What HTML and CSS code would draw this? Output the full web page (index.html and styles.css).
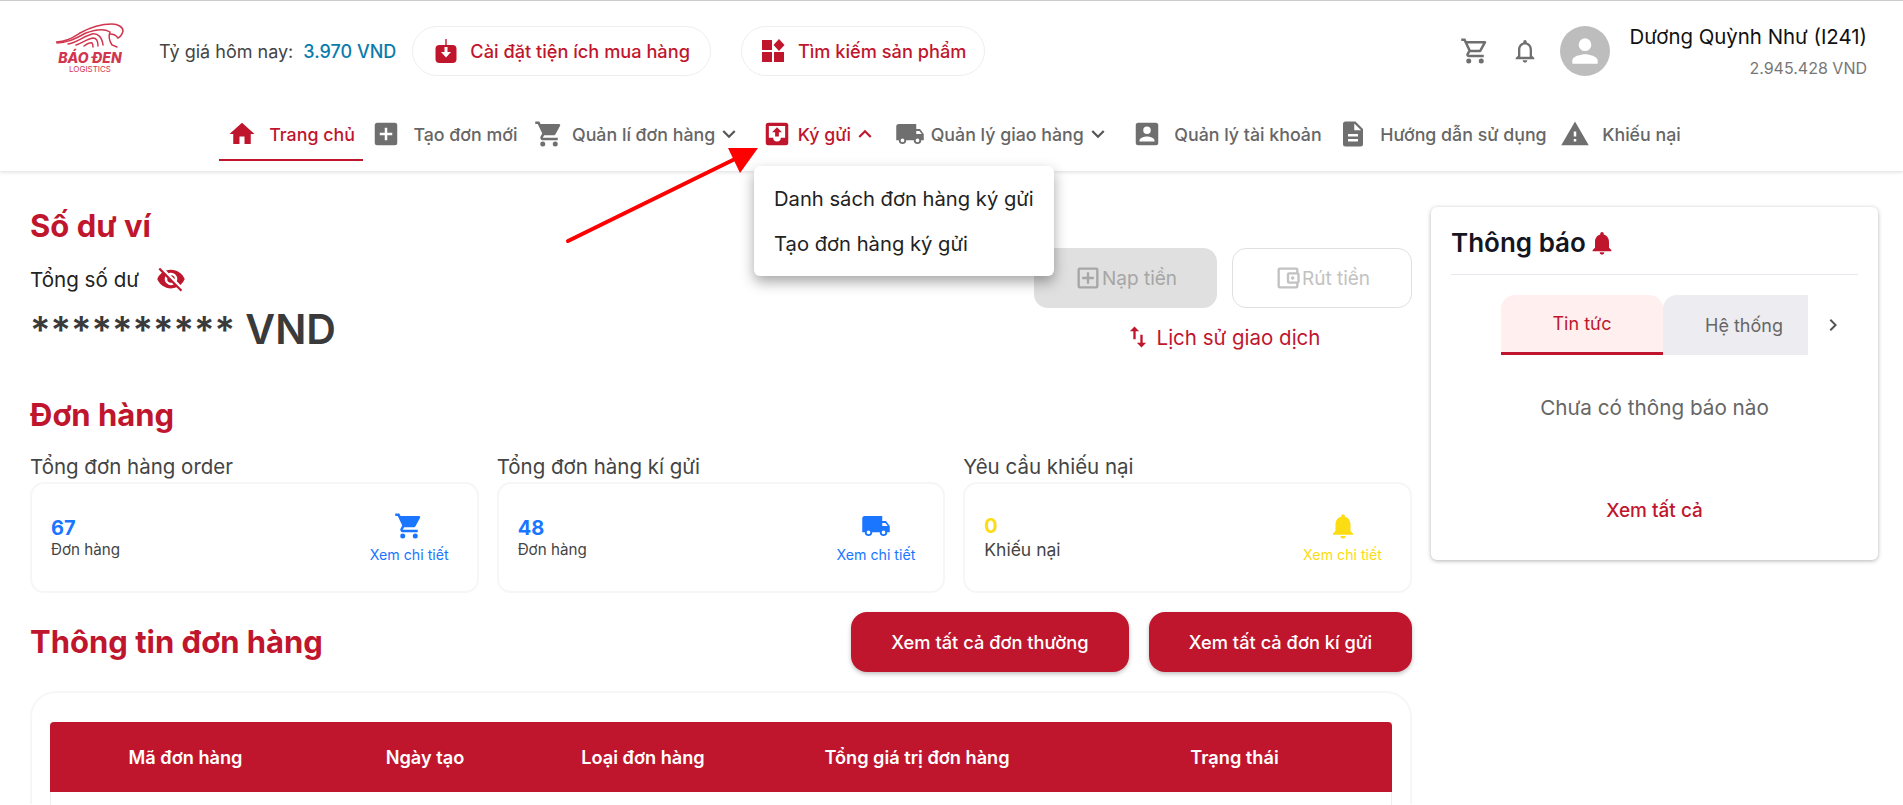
FILE: index.html
```html
<!DOCTYPE html>
<html lang="vi">
<head>
  <meta charset="utf-8">
  <title>Bao Den Logistics</title>
  <link rel="stylesheet" href="styles.css">
</head>
<body>
  <header class="site-header">
    <div class="top-row">
      <div class="logo">
        <svg width="68" height="26" viewBox="0 0 68 26" fill="none" stroke="#d2354e" stroke-width="1.5" stroke-linecap="round">
          <path d="M0 19C10 19 16 15 24 10C33 5 42 1 56 1C62 1 67 4 67 8C66 12 64 14 62 15C60 12 57 11 54 11"/>
          <path d="M1 20C12 20 20 15 30 10C38 7 48 5 54 9C52 14 54 19 56 22L61 24"/>
          <path d="M12 21C20 20 28 13 36 11C42 10 46 14 47 22"/>
          <path d="M20 22C26 20 31 16 37 15C40 15 42 18 42 23"/>
          <path d="M28 23C31 21 34 19 36 20C37 21 37 23 37 24"/>
        </svg>
        <span class="logo-name">BÁO ĐEN</span>
        <span class="logo-sub">LOGISTICS</span>
      </div>
      <div class="rate">Tỷ giá hôm nay: <b>3.970 VND</b></div>
      <a class="pill">
        <svg width="22" height="24" viewBox="0 0 22 24">
          <rect x="0.500" y="6" width="21" height="18" rx="4" fill="#bf162e"/>
          <rect x="10.300" y="0" width="1.400" height="8" fill="#bf162e"/>
          <path d="M9.500 8h3v5H16l-5 5.500L6 13h3.500z" fill="#fff"/>
        </svg>
        Cài đặt tiện ích mua hàng
      </a>
      <a class="pill pill-search">
        <svg width="24" height="24" viewBox="0 0 24 24" fill="#bf162e"><rect x="1" y="1" width="10" height="10"/><rect x="1" y="13" width="10" height="10"/><rect x="13" y="13" width="10" height="10"/><path d="M18 0l5.500 6-5.500 6-5.500-6z"/></svg>
        Tìm kiếm sản phẩm
      </a>
      <div class="user-area">
        <svg class="gray-icon" width="30" height="30" viewBox="0 0 24 24" fill="#6f6f6f"><path d="M15.550 13c.750 0 1.410-.410 1.750-1.030l3.580-6.490A1 1 0 0 0 20.010 4H5.210l-.940-2H1v2h2l3.600 7.590-1.350 2.440C4.520 15.370 5.480 17 7 17h12v-2H7l1.100-2h7.450zM6.160 6h12.150l-2.760 5H8.530L6.160 6zM7 18a2 2 0 1 0 0 4 2 2 0 0 0 0-4zm10 0a2 2 0 1 0 0 4 2 2 0 0 0 0-4z"/></svg>
        <svg class="gray-icon" width="28" height="28" viewBox="0 0 24 24" fill="#6f6f6f"><path d="M12 22a2 2 0 0 0 2-2h-4a2 2 0 0 0 2 2zm6-6v-5c0-3.070-1.640-5.640-4.500-6.320V4a1.500 1.500 0 0 0-3 0v.680C7.630 5.360 6 7.920 6 11v5l-2 2v1h16v-1l-2-2zm-2 1H8v-6c0-2.480 1.510-4.500 4-4.500s4 2.020 4 4.500v6z"/></svg>
        <div class="avatar">
          <svg width="38" height="38" viewBox="0 0 24 24" fill="#fff"><path d="M12 12a4 4 0 1 0 0-8 4 4 0 0 0 0 8zm0 2c-2.670 0-8 1.340-8 4v2h16v-2c0-2.660-5.330-4-8-4z"/></svg>
        </div>
        <div class="user-info">
          <div class="user-name">Dương Quỳnh Như (I241)</div>
          <div class="user-money">2.945.428 VND</div>
        </div>
      </div>
    </div>

    <nav class="main-nav">
      <a class="nav-item active">
        <svg width="30" height="30" viewBox="0 0 24 24" fill="#bf162e"><path d="M10 20v-6h4v6h5v-8h3L12 3 2 12h3v8z"/></svg>
        Trang chủ
      </a>
      <a class="nav-item">
        <svg width="30" height="30" viewBox="0 0 24 24" fill="#6f6f6f"><path d="M19 3H5a2 2 0 0 0-2 2v14a2 2 0 0 0 2 2h14a2 2 0 0 0 2-2V5a2 2 0 0 0-2-2zm-2 10h-4v4h-2v-4H7v-2h4V7h2v4h4v2z"/></svg>
        Tạo đơn mới
      </a>
      <a class="nav-item cart-item">
        <svg width="30" height="30" viewBox="0 0 24 24" fill="#6f6f6f"><path d="M7 18a2 2 0 1 0 0 4 2 2 0 0 0 0-4zM1 2v2h2l3.600 7.590-1.350 2.450A2 2 0 0 0 7 17h12v-2H7.420a.25.25 0 0 1-.250-.250l.030-.120.900-1.630h7.450c.750 0 1.410-.410 1.750-1.030l3.580-6.490A1 1 0 0 0 20 4H5.210l-.940-2H1zm16 16a2 2 0 1 0 0 4 2 2 0 0 0 0-4z"/></svg>
        Quản lí đơn hàng
        <svg class="chev" width="26" height="26" viewBox="0 0 24 24" fill="#555"><path d="M7.410 8.590 12 13.170l4.590-4.580L18 10l-6 6-6-6z"/></svg>
      </a>
      <a class="nav-item tight open">
        <svg width="30" height="30" viewBox="0 0 24 24">
          <rect x="3" y="3" width="18" height="18" rx="2" fill="#bf162e"/>
          <path d="M5.500 5.500h13V15h-3.500a3 3 0 0 1-6 0H5.500z" fill="#fff"/>
          <path d="M12 6.500l-4 4h2.500V14h3v-3.500H16z" fill="#bf162e"/>
        </svg>
        Ký gửi
        <svg class="chev" width="26" height="26" viewBox="0 0 24 24" fill="#bf162e"><path d="M7.410 15.410 12 10.830l4.590 4.580L18 14l-6-6-6 6z"/></svg>
      </a>
      <a class="nav-item tight">
        <svg width="30" height="30" viewBox="0 0 24 24" fill="#6f6f6f"><path d="M20 8h-3V4H3a2 2 0 0 0-2 2v11h2a3 3 0 0 0 6 0h6a3 3 0 0 0 6 0h2v-5l-3-4zM6 18.500a1.500 1.500 0 1 1 0-3 1.500 1.500 0 0 1 0 3zm13.500-9 1.960 2.500H17V9.500h2.500zM18 18.500a1.500 1.500 0 1 1 0-3 1.500 1.500 0 0 1 0 3z"/></svg>
        Quản lý giao hàng
        <svg class="chev" width="26" height="26" viewBox="0 0 24 24" fill="#555"><path d="M7.410 8.590 12 13.170l4.590-4.580L18 10l-6 6-6-6z"/></svg>
      </a>
      <a class="nav-item account-item">
        <svg width="30" height="30" viewBox="0 0 24 24" fill="#6f6f6f"><path d="M3 5v14a2 2 0 0 0 2 2h14a2 2 0 0 0 2-2V5a2 2 0 0 0-2-2H5a2 2 0 0 0-2 2zm12 4a3 3 0 1 1-6 0 3 3 0 0 1 6 0zm-9 8c0-2 4-3.100 6-3.100s6 1.100 6 3.100v1H6v-1z"/></svg>
        Quản lý tài khoản
      </a>
      <a class="nav-item">
        <svg width="30" height="30" viewBox="0 0 24 24" fill="#6f6f6f"><path d="M14 2H6a2 2 0 0 0-2 2v16a2 2 0 0 0 2 2h12a2 2 0 0 0 2-2V8l-6-6zm2 16H8v-2h8v2zm0-4H8v-2h8v2zm-3-5V3.500L18.500 9H13z"/></svg>
        Hướng dẫn sử dụng
      </a>
      <a class="nav-item complain-item">
        <svg width="30" height="30" viewBox="0 0 24 24" fill="#6f6f6f"><path d="M1 21h22L12 2 1 21zm12-3h-2v-2h2v2zm0-4h-2v-4h2v4z"/></svg>
        Khiếu nại
      </a>
    </nav>
  </header>

  <main class="page">
    <div class="left-col">
      <section class="wallet">
        <div>
          <h2 class="section-title">Số dư ví</h2>
          <div class="balance-label">
            Tổng số dư
            <svg width="30" height="30" viewBox="0 0 24 24" fill="#bf162e"><path d="M12 7a5 5 0 0 1 5 5c0 .650-.130 1.260-.360 1.830l2.920 2.920A11.800 11.800 0 0 0 23 12c-1.730-4.390-6-7.500-11-7.500-1.400 0-2.740.250-3.980.700l2.160 2.160C10.740 7.130 11.350 7 12 7zM2 4.270l2.280 2.280.460.460A11.800 11.800 0 0 0 1 12c1.730 4.390 6 7.500 11 7.500 1.550 0 3.030-.300 4.380-.840l.420.420L19.730 22 21 20.730 3.270 3 2 4.270zM7.530 9.800l1.550 1.550A2.800 2.800 0 0 0 9 12a3 3 0 0 0 3 3c.220 0 .440-.030.650-.080l1.550 1.550A5 5 0 0 1 7.530 9.800zm4.310-.780 3.150 3.150.020-.170a3 3 0 0 0-3-3l-.170.020z"/></svg>
          </div>
          <div class="balance-value"><span class="stars">**********</span> VND</div>
        </div>
        <div class="wallet-actions">
          <div class="wallet-buttons">
            <button class="btn-load" type="button">
              <svg width="28" height="28" viewBox="0 0 24 24" fill="#a6a6a6"><path d="M19 3H5a2 2 0 0 0-2 2v14a2 2 0 0 0 2 2h14a2 2 0 0 0 2-2V5a2 2 0 0 0-2-2zm0 16H5V5h14v14zm-8-2h2v-4h4v-2h-4V7h-2v4H7v2h4z"/></svg>
              Nạp tiền
            </button>
            <button class="btn-withdraw" type="button">
              <svg width="28" height="28" viewBox="0 0 24 24" fill="#c2c2c2"><path d="M21 7.280V5a2 2 0 0 0-2-2H5a2 2 0 0 0-2 2v14a2 2 0 0 0 2 2h14a2 2 0 0 0 2-2v-2.280A2 2 0 0 0 22 15V9a2 2 0 0 0-1-1.720zM20 9v6h-7V9h7zM5 19V5h14v2h-6a2 2 0 0 0-2 2v6a2 2 0 0 0 2 2h6v2H5zm11-5.500a1.500 1.500 0 1 0 0-3 1.500 1.500 0 0 0 0 3z"/></svg>
              Rút tiền
            </button>
          </div>
          <a class="history-link">
            <svg width="28" height="28" viewBox="0 0 24 24" fill="#bf162e"><path d="M16 17.010V10h-2v7.010h-3L15 21l4-3.990h-3zM9 3 5 6.990h3V14h2V6.990h3L9 3z"/></svg>
            Lịch sử giao dịch
          </a>
        </div>
      </section>

      <section class="orders">
        <h2 class="section-title">Đơn hàng</h2>
        <div class="stat-grid">
          <div class="stat">
            <div class="stat-label">Tổng đơn hàng order</div>
            <div class="stat-card blue">
              <div>
                <div class="stat-num">67</div>
                <div class="stat-unit">Đơn hàng</div>
              </div>
              <div class="stat-link">
                <svg width="30" height="30" viewBox="0 0 24 24" fill="currentColor"><path d="M7 18a2 2 0 1 0 0 4 2 2 0 0 0 0-4zM1 2v2h2l3.600 7.590-1.350 2.450A2 2 0 0 0 7 17h12v-2H7.420a.25.25 0 0 1-.250-.250l.030-.120.900-1.630h7.450c.750 0 1.410-.410 1.750-1.030l3.580-6.490A1 1 0 0 0 20 4H5.210l-.940-2H1zm16 16a2 2 0 1 0 0 4 2 2 0 0 0 0-4z"/></svg>
                Xem chi tiết
              </div>
            </div>
          </div>
          <div class="stat">
            <div class="stat-label">Tổng đơn hàng kí gửi</div>
            <div class="stat-card blue">
              <div>
                <div class="stat-num">48</div>
                <div class="stat-unit">Đơn hàng</div>
              </div>
              <div class="stat-link">
                <svg width="30" height="30" viewBox="0 0 24 24" fill="currentColor"><path d="M20 8h-3V4H3a2 2 0 0 0-2 2v11h2a3 3 0 0 0 6 0h6a3 3 0 0 0 6 0h2v-5l-3-4zM6 18.500a1.500 1.500 0 1 1 0-3 1.500 1.500 0 0 1 0 3zm13.500-9 1.960 2.500H17V9.500h2.500zM18 18.500a1.500 1.500 0 1 1 0-3 1.500 1.500 0 0 1 0 3z"/></svg>
                Xem chi tiết
              </div>
            </div>
          </div>
          <div class="stat">
            <div class="stat-label">Yêu cầu khiếu nại</div>
            <div class="stat-card yellow">
              <div>
                <div class="stat-num">0</div>
                <div class="stat-unit stat-unit-big">Khiếu nại</div>
              </div>
              <div class="stat-link">
                <svg width="30" height="30" viewBox="0 0 24 24" fill="currentColor"><path d="M12 22a2 2 0 0 0 2-2h-4a2 2 0 0 0 2 2zm6-6v-5c0-3.070-1.640-5.640-4.500-6.320V4a1.500 1.500 0 0 0-3 0v.680C7.630 5.360 6 7.920 6 11v5l-2 2v1h16v-1l-2-2z"/></svg>
                Xem chi tiết
              </div>
            </div>
          </div>
        </div>
      </section>

      <section class="order-info">
        <div class="order-info-head">
          <h2 class="section-title">Thông tin đơn hàng</h2>
          <div class="order-buttons">
            <button class="btn-red" type="button">Xem tất cả đơn thường</button>
            <button class="btn-red" type="button">Xem tất cả đơn kí gửi</button>
          </div>
        </div>
        <div class="table-card">
          <div class="table-head">
            <div>Mã đơn hàng</div>
            <div>Ngày tạo</div>
            <div>Loại đơn hàng</div>
            <div>Tổng giá trị đơn hàng</div>
            <div>Trạng thái</div>
          </div>
          <div class="table-body"></div>
        </div>
      </section>
    </div>

    <aside class="notice-card">
      <h3 class="notice-title">
        Thông báo
        <svg width="28" height="28" viewBox="0 0 24 24" fill="#bf162e"><path d="M12 22a2 2 0 0 0 2-2h-4a2 2 0 0 0 2 2zm6-6v-5c0-3.070-1.640-5.640-4.500-6.320V4a1.500 1.500 0 0 0-3 0v.680C7.630 5.360 6 7.920 6 11v5l-2 2v1h16v-1l-2-2z"/></svg>
      </h3>
      <div class="tabs">
        <div class="tab tab-active">Tin tức</div>
        <div class="tab">Hệ thống</div>
        <svg class="tab-next" width="24" height="24" viewBox="0 0 24 24" fill="#555"><path d="M8.590 16.590 13.170 12 8.590 7.410 10 6l6 6-6 6z"/></svg>
      </div>
      <p class="notice-empty">Chưa có thông báo nào</p>
      <a class="notice-all">Xem tất cả</a>
    </aside>
  </main>

  <div class="dropdown">
    <div class="dropdown-item">Danh sách đơn hàng ký gửi</div>
    <div class="dropdown-item">Tạo đơn hàng ký gửi</div>
  </div>

  <!-- red arrow drawn over the screenshot -->
  <svg class="annotation" width="200" height="100" viewBox="0 0 200 100">
    <line x1="3" y1="93" x2="172" y2="10" stroke="#fe0000" stroke-width="4" stroke-linecap="round"/>
    <polygon points="163,0 193,0 175,25" fill="#fe0000"/>
  </svg>
</body>
</html>
```

FILE: styles.css
```css
* {
  box-sizing: border-box;
}

html, body {
  height: 805px;
  overflow: hidden;
}

body {
  margin: 0;
  background-color: #ffffff;
  font-family: Inter, "Noto Sans", sans-serif;
  color: #222222;
  position: relative;
}

svg {
  flex-shrink: 0;
}

/* header */
.site-header {
  height: 171px;
  border-top: 1px solid #cccccc;
  background-color: #ffffff;
  box-shadow: 0 1px 4px rgba(0, 0, 0, 0.15);
  padding: 25px 36px 0 56px;
}

.top-row {
  display: flex;
  align-items: center;
  height: 50px;
}

.logo {
  width: 68px;
  margin-right: 35px;
  margin-top: -3px;
  align-self: flex-start;
  display: flex;
  flex-direction: column;
  align-items: center;
  color: #d2354e;
}

.logo-name {
  font-size: 14px;
  font-weight: 800;
  font-style: italic;
  line-height: 11px;
  margin-top: 3px;
  white-space: nowrap;
}

.logo-sub {
  font-size: 8px;
  line-height: 7px;
  margin-top: 3px;
}

.rate {
  font-size: 18px;
  color: #444444;
  white-space: nowrap;
  margin-right: 16px;
}

.rate b {
  font-weight: 500;
  color: #0a7cab;
  margin-left: 5px;
}

.pill {
  height: 50px;
  display: flex;
  align-items: center;
  gap: 13px;
  padding: 0 20px 0 22px;
  border: 1px solid #eeeeee;
  border-radius: 25px;
  font-size: 18.2px;
  font-weight: 500;
  color: #bf162e;
  white-space: nowrap;
  margin-right: 30px;
}

.pill-search {
  padding: 0 18px 0 19px;
}

.user-area {
  margin-left: auto;
  display: flex;
  align-items: center;
}

.gray-icon {
  margin-right: 21px;
}

.avatar {
  width: 50px;
  height: 50px;
  border-radius: 50%;
  background-color: #bdbdbd;
  display: flex;
  align-items: center;
  justify-content: center;
}

.user-info {
  margin-left: 20px;
  text-align: right;
}

.user-name {
  font-size: 20.4px;
  line-height: 24px;
  color: #111111;
}

.user-money {
  font-size: 16px;
  line-height: 20px;
  color: #777777;
  margin-top: 9px;
}

.main-nav {
  height: 52px;
  margin: 33px -36px 0 -56px;
  padding-left: 5px;
  display: flex;
  justify-content: center;
  align-items: flex-start;
}

.nav-item {
  height: 52px;
  display: flex;
  align-items: center;
  gap: 12px;
  padding: 0 8.3px;
  border-bottom: 2px solid transparent;
  font-size: 17.8px;
  font-weight: 500;
  color: #666666;
  white-space: nowrap;
}

.nav-item.tight {
  gap: 6px;
}

.nav-item.cart-item {
  gap: 8px;
  margin-right: 3px;
}

.nav-item.account-item {
  margin-left: 5px;
}

.nav-item.complain-item {
  margin-left: -3px;
}

.nav-item.active {
  color: #bf162e;
  border-bottom-color: #bf162e;
}

.nav-item.open {
  color: #bf162e;
}

.chev {
  margin-left: -5px;
}

.cart-item .chev {
  margin-left: -7px;
}

/* main content */
.page {
  display: flex;
  gap: 19px;
  padding: 36px 25px 0 30px;
}

.left-col {
  width: 1382px;
  flex-shrink: 0;
}

.section-title {
  margin: 0;
  font-size: 31px;
  font-weight: 700;
  line-height: 36px;
  color: #bf162e;
}

.wallet {
  display: flex;
  justify-content: space-between;
  height: 190px;
  padding-top: 1px;
}

.balance-label {
  display: flex;
  align-items: center;
  gap: 17px;
  font-size: 20.6px;
  margin-top: 20px;
  height: 30px;
}

.balance-value {
  font-size: 41px;
  font-weight: 600;
  line-height: 50px;
  margin-top: 10px;
  color: #3a3a3a;
}

.stars {
  font-size: 38px;
}

.wallet-actions {
  width: 378px;
  padding-top: 40px;
}

.wallet-buttons {
  display: flex;
  gap: 15px;
}

.wallet-buttons button {
  height: 60px;
  border-radius: 14px;
  display: flex;
  align-items: center;
  justify-content: center;
  font-family: inherit;
  font-size: 19px;
}

.btn-load {
  width: 183px;
  background-color: #e0e0e0;
  border: none;
  color: #a6a6a6;
}

.btn-withdraw {
  width: 180px;
  background-color: #ffffff;
  border: 1px solid #e0e0e0;
  color: #c2c2c2;
}

.history-link {
  display: flex;
  align-items: center;
  justify-content: center;
  gap: 5px;
  height: 30px;
  margin-top: 14px;
  padding-right: 2px;
  font-size: 20.5px;
  color: #bf162e;
}

.stat-grid {
  display: grid;
  grid-template-columns: repeat(3, 1fr);
  gap: 18px;
  margin-top: 21px;
}

.stat-label {
  font-size: 20.5px;
  line-height: 26px;
  color: #444444;
}

.stat-card {
  height: 111px;
  margin-top: 2px;
  border: 2px solid #f6f6f6;
  border-radius: 14px;
  padding: 0 28px 0 19px;
  display: flex;
  justify-content: space-between;
  align-items: center;
}

.stat-num {
  font-size: 20px;
  font-weight: 700;
  line-height: 24px;
}

.stat-unit {
  font-size: 15.2px;
  line-height: 20px;
  color: #444444;
}

.stat-unit-big {
  font-size: 17.5px;
  line-height: 24px;
}

.stat-link {
  display: flex;
  flex-direction: column;
  align-items: center;
  gap: 5px;
  font-size: 14.2px;
  margin-top: -1px;
}

.blue {
  color: #1a76ff;
}

.yellow {
  color: #fcdc12;
}

.order-info {
  margin-top: 19px;
}

.order-info-head {
  display: flex;
  justify-content: space-between;
  align-items: center;
}

.order-buttons {
  display: flex;
  gap: 20px;
}

.btn-red {
  height: 60px;
  padding: 0 40px;
  background-color: #bf162e;
  border: none;
  border-radius: 16px;
  color: #ffffff;
  font-family: inherit;
  font-size: 18.3px;
  font-weight: 500;
  box-shadow: 0 2px 4px rgba(0, 0, 0, 0.25);
}

/* runs on below the fold, so no bottom edge */
.table-card {
  margin-top: 19px;
  height: 113px;
  border: 2px solid #f6f6f6;
  border-bottom: none;
  border-radius: 26px 26px 0 0;
  padding: 29px 18px 0;
}

.table-head {
  height: 70px;
  background-color: #bf162e;
  border-radius: 4px 4px 0 0;
  display: grid;
  grid-template-columns: 271px 208px 228px 320px 1fr;
  align-items: center;
  text-align: center;
  color: #ffffff;
  font-size: 18.2px;
  font-weight: 600;
}

.table-body {
  height: 14px;
  border: 1px solid #eeeeee;
  border-top: none;
}

/* notice card */
.notice-card {
  width: 447px;
  height: 353px;
  padding: 20px;
  border-radius: 6px;
  background-color: #ffffff;
  box-shadow: 0 1px 4px rgba(0, 0, 0, 0.3);
}

.notice-title {
  margin: 0;
  padding-bottom: 15px;
  border-bottom: 1px solid #e6e8f0;
  display: flex;
  align-items: center;
  gap: 2px;
  font-size: 26px;
  font-weight: 600;
  line-height: 32px;
  color: #15151f;
}

.tabs {
  display: flex;
  align-items: center;
  margin-top: 20px;
  padding-left: 50px;
}

.tab {
  width: 162px;
  height: 60px;
  display: flex;
  align-items: center;
  justify-content: center;
  background-color: #edecf1;
  border-radius: 14px 14px 0 0;
  font-size: 18px;
  color: #666666;
}

.tab + .tab {
  width: 145px;
  padding-left: 17px;
  border-radius: 14px 0 0 0;
}

.tab-active {
  background-color: #fff0ef;
  border-bottom: 3px solid #bf162e;
  color: #bf162e;
}

.tab-next {
  margin-left: 13px;
}

.notice-empty {
  margin: 40px 0 0;
  text-align: center;
  font-size: 20.7px;
  color: #666666;
}

.notice-all {
  display: block;
  margin-top: 79px;
  text-align: center;
  font-size: 19px;
  font-weight: 500;
  color: #bf162e;
}

/* open menu, lies over the page */
.dropdown {
  position: absolute;
  left: 754px;
  top: 166px;
  width: 300px;
  height: 110px;
  padding: 10px 0;
  background-color: #ffffff;
  border-radius: 6px;
  box-shadow: 0 6px 14px rgba(0, 0, 0, 0.35);
}

.dropdown-item {
  height: 45px;
  padding-left: 20px;
  display: flex;
  align-items: center;
  font-size: 20.2px;
  color: #222222;
  white-space: nowrap;
}

.annotation {
  position: absolute;
  left: 565px;
  top: 148px;
}
```
